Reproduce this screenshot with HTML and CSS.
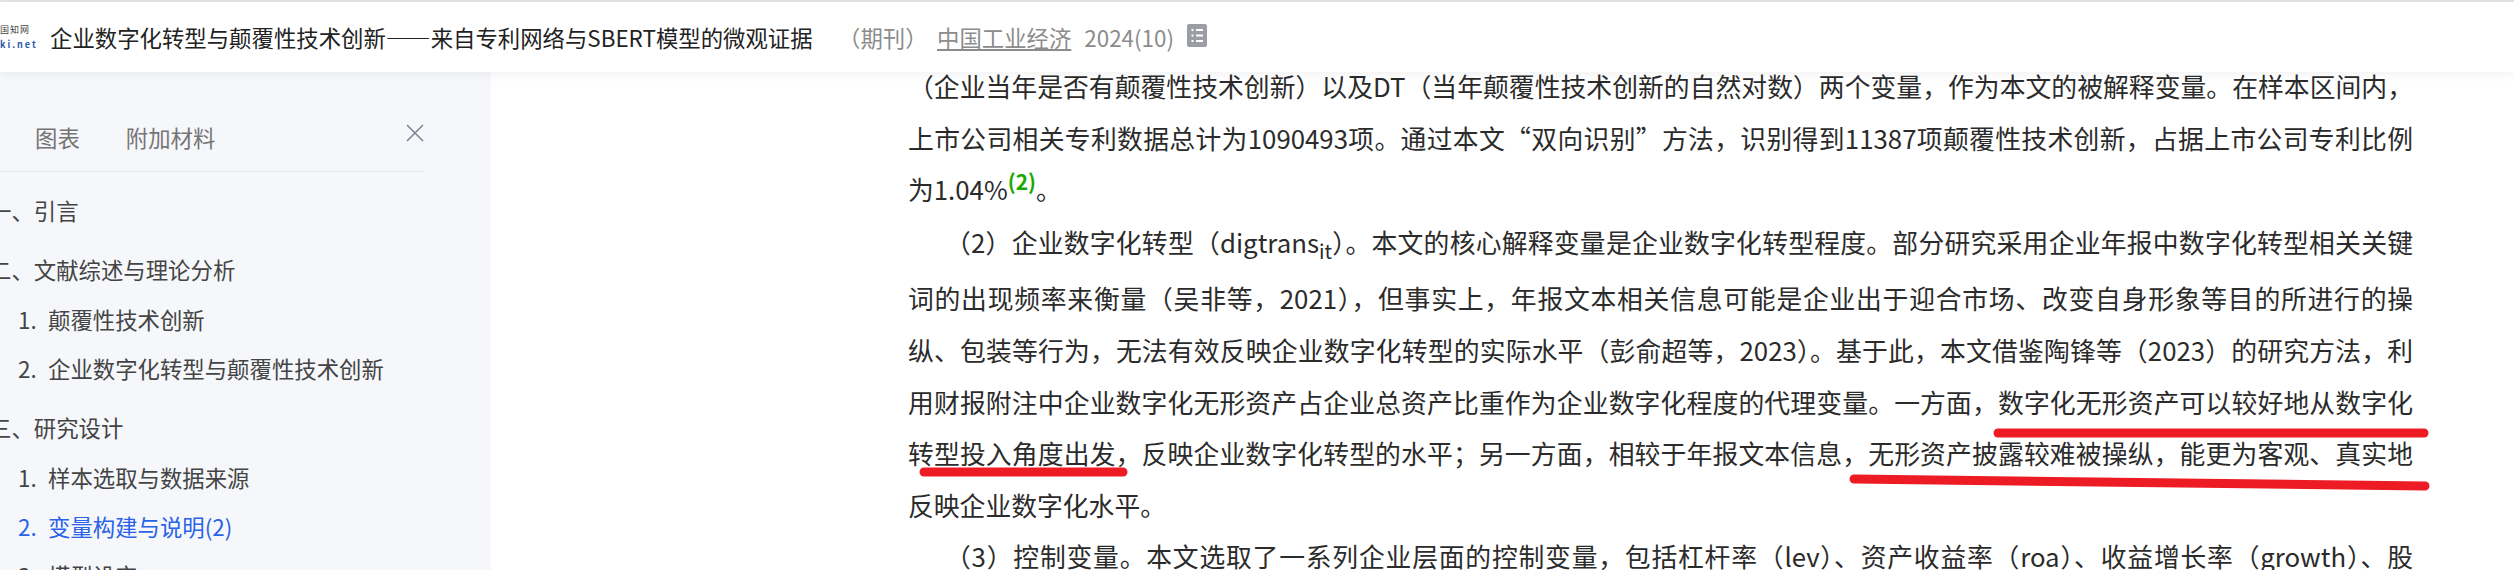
FILE: index.html
```html
<!DOCTYPE html>
<html lang="zh-CN">
<head>
    <meta charset="UTF-8">
    <title>企业数字化转型与颠覆性技术创新</title>
    <link rel="stylesheet" href="styles.css">
</head>
<body>
    <div class="top-strip"></div>
    <header class="doc-header">
        <div class="logo">
            <span class="logo-cn">国知网</span>
            <span class="logo-en">ki.net</span>
        </div>
        <div class="doc-title">企业数字化转型与颠覆性技术创新——来自专利网络与SBERT模型的微观证据</div>
        <div class="doc-type">（期刊）</div>
        <a class="doc-journal">中国工业经济</a>
        <div class="doc-issue">2024(10)</div>
        <svg class="doc-icon" viewBox="0 0 20 23">
            <rect width="20" height="23" rx="2" fill="#9a9da3"/>
            <rect x="4.5" y="5" width="2" height="2" fill="#fff"/>
            <rect x="9" y="5" width="7" height="2" fill="#fff"/>
            <rect x="4.5" y="10.5" width="2" height="2" fill="#fff"/>
            <rect x="9" y="10.5" width="7" height="2" fill="#fff"/>
            <rect x="4.5" y="16" width="2" height="2" fill="#fff"/>
            <rect x="9" y="16" width="7" height="2" fill="#fff"/>
        </svg>
    </header>
    <div class="page">
        <aside class="sidebar">
            <div class="tabs">
                <span class="tab">图表</span>
                <span class="tab">附加材料</span>
                <svg class="tab-close" viewBox="0 0 18 18">
                    <path d="M1 1 L17 17 M17 1 L1 17" stroke="#7d8590" stroke-width="1.6" fill="none"/>
                </svg>
            </div>
            <ul class="toc">
                <li class="toc-h1">一、引言</li>
                <li class="toc-h1">二、文献综述与理论分析</li>
                <li class="toc-h2"><span class="num">1.</span>颠覆性技术创新</li>
                <li class="toc-h2"><span class="num">2.</span>企业数字化转型与颠覆性技术创新</li>
                <li class="toc-h1">三、研究设计</li>
                <li class="toc-h2"><span class="num">1.</span>样本选取与数据来源</li>
                <li class="toc-h2 active"><span class="num">2.</span>变量构建与说明(2)</li>
                <li class="toc-h2"><span class="num">3.</span>模型设定</li>
            </ul>
        </aside>
        <main class="article">
            <p>
                <span class="line">（企业当年是否有颠覆性技术创新）以及DT（当年颠覆性技术创新的自然对数）两个变量，作为本文的被解释变量。在样本区间内，</span>
                <span class="line">上市公司相关专利数据总计为1090493项。通过本文“双向识别”方法，识别得到11387项颠覆性技术创新，占据上市公司专利比例</span>
                <span class="line last">为1.04%<sup class="ref">(2)</sup>。</span>
            </p>
            <p>
                <span class="line indent first">（2）企业数字化转型（digtrans<sub>it</sub>）。本文的核心解释变量是企业数字化转型程度。部分研究采用企业年报中数字化转型相关关键</span>
                <span class="line">词的出现频率来衡量（吴非等，2021），但事实上，年报文本相关信息可能是企业出于迎合市场、改变自身形象等目的所进行的操</span>
                <span class="line">纵、包装等行为，无法有效反映企业数字化转型的实际水平（彭俞超等，2023）。基于此，本文借鉴陶锋等（2023）的研究方法，利</span>
                <span class="line">用财报附注中企业数字化无形资产占企业总资产比重作为企业数字化程度的代理变量。一方面，数字化无形资产可以较好地从数字化</span>
                <span class="line">转型投入角度出发，反映企业数字化转型的水平；另一方面，相较于年报文本信息，无形资产披露较难被操纵，能更为客观、真实地</span>
                <span class="line last">反映企业数字化水平。</span>
            </p>
            <p>
                <span class="line indent">（3）控制变量。本文选取了一系列企业层面的控制变量，包括杠杆率（lev）、资产收益率（roa）、收益增长率（growth）、股</span>
            </p>
        </main>
    </div>
    <svg class="marks" viewBox="0 0 2514 570">
        <path d="M1998 433 L2424 433" />
        <path d="M924 472 L1123 472" />
        <path d="M1854 479 L2425 486" />
    </svg>
</body>
</html>
```

FILE: styles.css
```css
html, body {
    margin: 0;
    height: 570px;
    overflow: hidden;
    background-color: #fff;
}
body {
    position: relative;
    font-family: "Noto Sans CJK SC", "Noto Sans", sans-serif;
    color: #333;
}
.top-strip {
    height: 2px;
    background-color: #e4e4e4;
}
.doc-header {
    display: flex;
    align-items: center;
    height: 70px;
    background-color: #fff;
    box-shadow: 0 2px 10px rgba(0, 0, 0, 0.06);
    position: relative;
    z-index: 2;
    font-size: 22.4px;
}
.logo {
    width: 50px;
    flex: none;
    display: flex;
    flex-direction: column;
    align-items: flex-start;
    line-height: 15px;
}
.logo-cn {
    font-size: 9px;
    letter-spacing: 1px;
    color: #444;
    white-space: nowrap;
}
.logo-en {
    font-size: 9px;
    font-weight: bold;
    letter-spacing: 2px;
    color: #2c5aa8;
    white-space: nowrap;
}
.doc-title {
    width: 788px;
    flex: none;
    color: #222;
    white-space: nowrap;
}
.doc-type {
    width: 99px;
    flex: none;
    color: #8c8c8c;
}
.doc-journal {
    color: #8c8c8c;
    text-decoration: underline;
    margin-right: 13px;
}
.doc-issue {
    color: #8c8c8c;
    margin-right: 13px;
}
.doc-icon {
    width: 20px;
    height: 23px;
    margin-bottom: 3px;
}
.page {
    display: flex;
    height: 498px;
}
.sidebar {
    width: 491px;
    flex: none;
    background-color: #f5f7fb;
    overflow: hidden;
    font-size: 22.4px;
}
.tabs {
    display: flex;
    align-items: center;
    width: 425px;
    height: 100px;
    box-sizing: border-box;
    padding: 30px 0 0 35px;
    gap: 46px;
    border-bottom: 1px solid #e3e5ea;
    color: #757575;
    white-space: nowrap;
}
.tab-close {
    width: 18px;
    height: 18px;
    flex: none;
    margin-left: 145px;
    margin-bottom: 8px;
}
.toc {
    list-style: none;
    margin: 0;
    padding: 4px 0 0 0;
    color: #444;
}
.toc li {
    line-height: 49px;
    white-space: nowrap;
}
.toc-h1 {
    margin: 10px 0 1px -11px;
}
.toc-h2 {
    padding-left: 18px;
}
.num {
    display: inline-block;
    width: 30px;
}
.toc .active {
    color: #2a62e8;
}
.article {
    flex: 1;
    padding: 0 0 0 417px;
    margin-top: -12px;
    font-size: 25.8px;
    color: #2b2b2b;
    overflow: hidden;
}
.article p {
    margin: 0;
    width: 1505px;
}
.line {
    display: block;
    height: 51.6px;
    line-height: 51.6px;
    text-align: justify;
    text-align-last: justify;
}
.line.last {
    text-align-last: left;
}
.line.indent {
    text-indent: 37px;
}
.line.first {
    margin: 1px 0 5px;
}
.ref {
    color: #19a800;
    font-size: 21px;
    font-weight: bold;
    line-height: 0;
}
sub {
    font-size: 20px;
    line-height: 0;
}
.marks {
    position: absolute;
    left: 0;
    top: 0;
    width: 2514px;
    height: 570px;
    z-index: 3;
    pointer-events: none;
}
.marks path {
    stroke: #ed1c24;
    stroke-width: 9;
    stroke-linecap: round;
    fill: none;
}
```
